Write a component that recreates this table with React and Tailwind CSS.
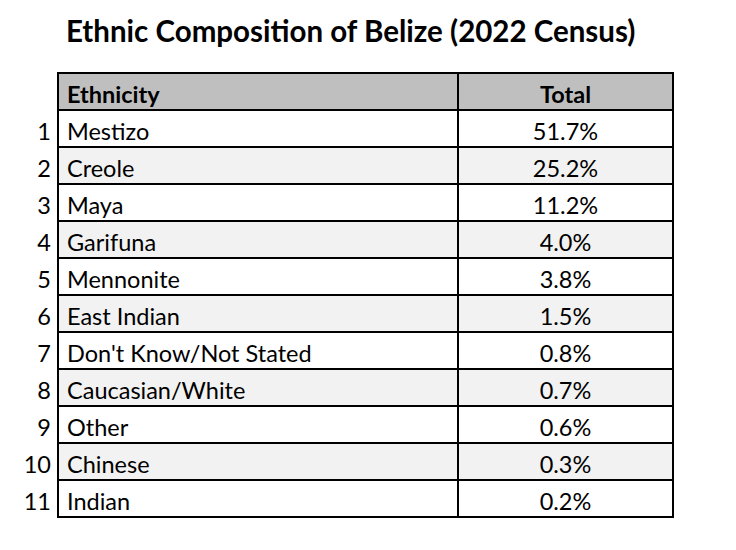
import React from "react";

const rows = [
  ["Mestizo", "51.7%"],
  ["Creole", "25.2%"],
  ["Maya", "11.2%"],
  ["Garifuna", "4.0%"],
  ["Mennonite", "3.8%"],
  ["East Indian", "1.5%"],
  ["Don't Know/Not Stated", "0.8%"],
  ["Caucasian/White", "0.7%"],
  ["Other", "0.6%"],
  ["Chinese", "0.3%"],
  ["Indian", "0.2%"],
];

export default function App() {
  return (
    <div className="w-[736px] h-[550px] bg-white text-black font-['Lato','Liberation_Sans',sans-serif]">
      {/* TITLE */}
      <div className="h-[72px] pl-[66px] pt-[13px]">
        <h1 className="text-[29.5px] leading-[36px] font-bold">
          Ethnic Composition of Belize (2022 Census)
        </h1>
      </div>

      {/* TABLE */}
      <div className="flex flex-col text-[23.5px]">
        {/* HEADER */}
        <div className="flex h-[37px]">
          <div className="w-[57px]" />
          <div className="flex w-[617px] border-2 border-b-0 border-black bg-[#bfbfbf] font-bold">
            <div className="w-[398px] pl-[8px] pt-[6px] leading-[28px]">Ethnicity</div>
            <div className="flex-1 border-l-2 border-black text-center pt-[6px] leading-[28px]">Total</div>
          </div>
        </div>

        {rows.map(([name, total], i) => (
          <div key={name} className="flex h-[37px]">
            <div className="w-[57px] pr-[6px] text-right pt-[8px] leading-[28px]">{i + 1}</div>
            <div
              className={`flex w-[617px] border-2 border-black ${i === rows.length - 1 ? "h-[39px]" : "border-b-0"} ${i % 2 === 1 ? "bg-[#f2f2f2]" : "bg-white"}`}
            >
              <div className="w-[398px] pl-[8px] pt-[6px] leading-[28px]">{name}</div>
              <div className="flex-1 border-l-2 border-black text-center pt-[6px] leading-[28px]">{total}</div>
            </div>
          </div>
        ))}
      </div>
    </div>
  );
}
